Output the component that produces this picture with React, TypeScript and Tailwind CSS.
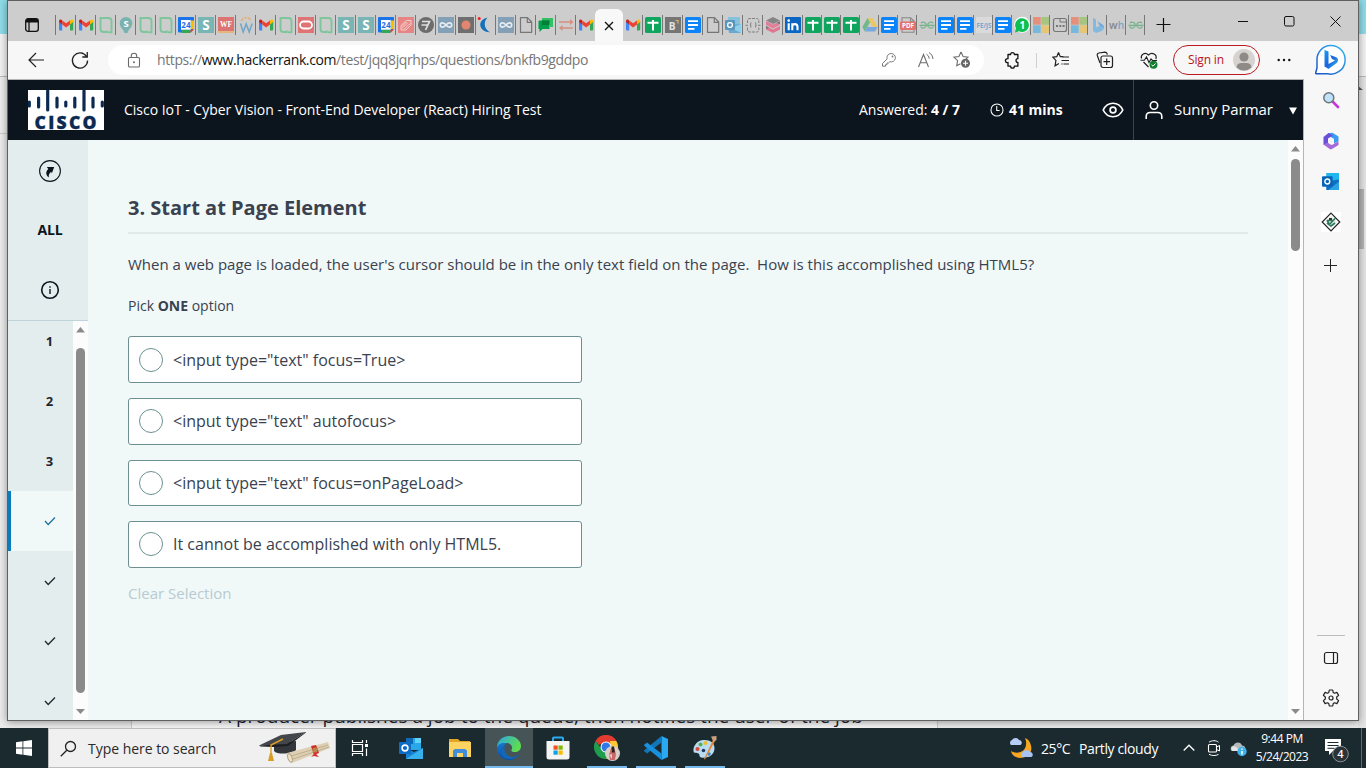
import React, { type ReactNode } from "react";

/* ---------- helpers ---------- */

function Icon({ size = 16, box = 16, className = "", children }: { size?: number; box?: number; className?: string; children: ReactNode }) {
  return (
    <svg width={size} height={size} viewBox={`0 0 ${box} ${box}`} fill="none" className={`shrink-0 overflow-visible ${className}`}>
      {children}
    </svg>
  );
}

/* ---------- tab favicons ---------- */

const Letter = ({ children, x = 8, y = 12, s = 12, fill = "#fff", family = "Open Sans", len }: { children: string; x?: number; y?: number; s?: number; fill?: string; family?: string; len?: number }) => (
  <text x={x} y={y} fontSize={s} fill={fill} textAnchor="middle" fontWeight={700} fontFamily={family} textLength={len} lengthAdjust="spacingAndGlyphs">
    {children}
  </text>
);

const Gmail = () => (
  <Icon>
    <path d="M1 4v8.600c0 .5.4.9.9.9h2.300V6.200z" fill="#4285f4" />
    <path d="M15.200 4v8.600c0 .5-.4.9-.9.9H12V6.200z" fill="#34a853" />
    <path d="M12 3.600v3.900l3.200-2.400V4.200c0-1.500-1.600-2-2.600-1.200z" fill="#fbbc04" />
    <path d="M4.200 3.600v3.900L1 5.100V4.200C1 2.700 2.600 2.200 3.600 3z" fill="#c5221f" />
    <path d="M4.200 7.500V3.400L8.100 6.300 12 3.400v4.100l-3.900 3z" fill="#ea4335" />
  </Icon>
);
const Bracket = () => (
  <Icon>
    <path d="M10 15.200h3.500V4c0-2-1-3-3-3H6.500V2M9 1H2.500v11c0 2 1 3 3 3h3.300V13.500" stroke="#7fc59c" strokeWidth="1.900" />
  </Icon>
);
const PinS = () => (
  <Icon>
    <path d="M8 0a6.300 6.300 0 0 1 6.300 6.300c0 4-3.300 5.200-4.800 9.700h-3C5 11.500 1.700 10.300 1.700 6.300A6.300 6.300 0 0 1 8 0z" fill="#79b3b1" />
    <Letter y={9.800} s={9.500}>S</Letter>
  </Icon>
);
const Calendar = () => (
  <Icon>
    <path d="M1 0h14a1 1 0 0 1 1 1v11l-4 3.500H1a1 1 0 0 1-1-1V1a1 1 0 0 1 1-1z" fill="#1a73e8" />
    <path d="M12.500 3.500H16V12h-3.500z" fill="#fbbc04" />
    <path d="M3.500 12.500h9V16h-9z" fill="#34a853" />
    <path d="M12.500 12.500H16L12.500 16z" fill="#ea4335" />
    <path d="M3 3h9.700v9.700H3z" fill="#fff" />
    <Letter x={7.900} y={10.800} s={8} fill="#1a73e8">24</Letter>
  </Icon>
);
const SquareS = () => (
  <Icon>
    <path d="M0 0h16v16H0z" fill="#78b5b4" />
    <Letter y={12.900} s={13.500}>S</Letter>
  </Icon>
);
const Wf = () => (
  <Icon>
    <path d="M0 0h16v14H0z" fill="#dd7474" />
    <path d="M0 14h16v2H0z" fill="#e3b77c" />
    <Letter y={10} s={7.500} family="Liberation Serif" len={12}>WF</Letter>
  </Icon>
);
const ArcW = () => (
  <Icon>
    <path d="M3.500 4a5 5 0 0 1 9.500 0" stroke="#e3ab6c" strokeWidth="1.300" strokeDasharray="3 1" />
    <path d="M2.500 6.500l2.700 8.500L8.200 7l3 8 3-8.500" stroke="#73a5c6" strokeWidth="1.500" />
  </Icon>
);
const Oracle = () => (
  <Icon>
    <path d="M0 0h16v16H0z" fill="#e07373" />
    <rect x="2" y="4.500" width="12" height="7" rx="3.500" stroke="#fff" strokeWidth="1.800" />
  </Icon>
);
const Stripes = () => (
  <Icon>
    <path d="M0 0h16v16H0z" fill="#e68583" />
    <path d="M3 8.500L8.500 3.500H13v4.500L8 13H3zM4 11.500l6-6M6 12.500l6-6M4 9.500l4.500-4.500" stroke="#f6d7d4" strokeWidth=".9" />
  </Icon>
);
const Seven = () => (
  <Icon>
    <circle cx="8" cy="8" r="8" fill="#6c6c6c" />
    <path d="M4 4.500h7.500L7.500 13M3.500 8h7" stroke="#e0e0e0" strokeWidth="1.700" />
  </Icon>
);
const Infinity2 = () => (
  <Icon>
    <path d="M0 0h16v16H0z" fill="#84a0b6" />
    <path d="M8 8C6 5.400 2.300 5 2.300 8S6 10.600 8 8s5.700-3 5.700 0S10 10.600 8 8z" stroke="#e6edf2" strokeWidth="1.700" />
  </Icon>
);
const Record = () => (
  <Icon>
    <path d="M0 0h16v16H0z" fill="#6f6f6f" />
    <circle cx="8" cy="8" r="4.500" fill="#e2866f" />
  </Icon>
);
const Crescent = () => (
  <Icon>
    <path d="M9.500.5C3 2 .5 7 3.500 11.500c1.800 2.600 5 4 9 3.800C7.500 13.500 4 6.500 9.500.5z" fill="#1371b9" />
    <circle cx="1.200" cy="1.500" r="1.500" fill="#f2201f" />
  </Icon>
);
const Doc = () => (
  <Icon>
    <path d="M2.500 .7h7L13.700 5v10.300H2.500zM9.300 .7v4.700h4.400" stroke="#767676" strokeWidth="1.200" strokeLinejoin="round" />
  </Icon>
);
const Chat = () => (
  <Icon>
    <path d="M4 1h11v9h-3V5H4z" fill="#34bf63" />
    <path d="M.5 4.500A1 1 0 0 1 1.500 3.500h10v8.500H4.500L1.500 15v-3H.5z" fill="#00a04a" />
    <path d="M4 3.500h7.500V8H4z" fill="#007f38" />
  </Icon>
);
const Arrows = () => (
  <Icon>
    <path d="M1 5h12M3 11h12" stroke="#d88f81" strokeWidth="1.400" />
    <path d="M12 2l3.500 3L12 8zM4.500 8L1 11l3.500 3z" fill="#d88f81" />
  </Icon>
);
const Sheets = () => (
  <Icon>
    <rect width="16" height="16" rx="1.500" fill="#0fa55e" />
    <path d="M2.500 5.700h11M8 3v10.500" stroke="#fff" strokeWidth="2" />
  </Icon>
);
const BoxB = () => (
  <Icon>
    <path d="M0 0h16v16H0z" fill="#757575" />
    <Letter x={7} y={13} s={10} fill="#e4e4e4">B</Letter>
    <path d="M10.500 3.500H13v3" stroke="#d8b274" strokeWidth="1.200" />
  </Icon>
);
const Docs = () => (
  <Icon>
    <rect width="16" height="16" rx="1.500" fill="#0a84f8" />
    <path d="M3 4.200h10M3 8h10M3 11.800h6.500" stroke="#fff" strokeWidth="1.800" />
  </Icon>
);
const OutlookFaded = () => (
  <Icon>
    <path d="M3 0h12v11H3z" fill="#86c2dc" />
    <path d="M3 8l13-1v9H4z" fill="#67a9cf" />
    <path d="M6 11l10-4v9z" fill="#8fd0e8" />
    <rect y="3" width="10" height="10" rx="1" fill="#5d96bd" />
    <circle cx="5" cy="8" r="2.400" stroke="#fff" strokeWidth="1.300" />
  </Icon>
);
const Braces = () => (
  <Icon>
    <path d="M2.500 6V3.500C2.500 2 3.500 1.500 5 1.500h6.500C13 1.500 13.800 2 13.800 3.500V6M2.500 10.500V13c0 1.500 1 2 2.500 2h6.500c1.500 0 2.300-.5 2.300-2v-2.500M.5 8.300h2.500M13 8.300h2.500" stroke="#7e7e7e" strokeWidth="1" strokeDasharray="3 1" />
    <path d="M6 5.500L5.500 8l.5 2.500M10.500 5.500L11 8l-.5 2.500" stroke="#7e7e7e" />
  </Icon>
);
const Stack = () => (
  <Icon>
    <path d="M8 0l7 3.500L8 7 1 3.500z" fill="#858585" />
    <path d="M1 4l7 3.500 3-1.500 4 2-7 3.500L1 8z" fill="#e07f97" />
    <path d="M11 6l4-2v3.500z" fill="#777" />
    <path d="M1 9l7 3.500L15 9v3.500L8 16l-7-3.500z" fill="#df7791" />
    <path d="M1 9l3 1.500-3 1.500z" fill="#777" />
  </Icon>
);
const LinkedIn = () => (
  <Icon>
    <rect width="16" height="16" rx="1" fill="#0a66c2" />
    <path d="M3.700 6.200v7M7.300 6.200v7M7.300 9.500c0-3 5.200-3.500 5.200.5v3.200" stroke="#fff" strokeWidth="2.100" />
    <circle cx="3.700" cy="3.600" r="1.300" fill="#fff" />
  </Icon>
);
const Drive = () => (
  <Icon>
    <path d="M5.500 1h5L5.500 9.700 2.800 14.500.3 10z" fill="#71b98b" />
    <path d="M5.500 1h5l5.200 9h-5z" fill="#e9c765" />
    <path d="M5.300 10h10.400l-2.500 4.500H2.800z" fill="#7ba7e0" />
  </Icon>
);
const Pdf = () => (
  <Icon>
    <path d="M2 5V.7h8.500L14 4v2M2 12v3.300h12V12M10.500 1v3.300H14" stroke="#888" strokeWidth="1.100" />
    <rect x="0" y="4.500" width="16" height="8.500" rx="1" fill="#e2726c" />
    <Letter y={11.300} s={6.500} len={12}>PDF</Letter>
  </Icon>
);
const Geeks = () => (
  <Icon>
    <path d="M1.800 6.200C3.500 4.500 7.300 5 7.400 8.300 7 11.600 2.600 12 1.700 9.500M.5 8.300h7M14.200 6.200C12.500 4.500 8.700 5 8.600 8.300c.4 3.300 4.800 3.700 5.700 1.200M15.500 8.300h-7" stroke="#73b18a" strokeWidth="1.200" />
  </Icon>
);
const FeJs = () => (
  <Icon>
    <path d="M0 0h16v16H0z" fill="#dadada" />
    <Letter y={10.500} s={6.500} fill="#79a8ce" len={15}>FE/JS</Letter>
  </Icon>
);
const WhatsApp = () => (
  <Icon>
    <circle cx="8.200" cy="7.800" r="8" fill="#fff" />
    <path d="M1 15.500l1-4A6.900 6.900 0 1 1 5 14.300z" fill="#0cbf52" />
    <Letter x={8.300} y={11.500} s={10}>1</Letter>
  </Icon>
);
const Microsoft = () => (
  <Icon>
    <path d="M0 0h7.700v7.700H0z" fill="#e4907a" />
    <path d="M8.300 0H16v7.700H8.300z" fill="#a5c580" />
    <path d="M0 8.300h7.700V16H0z" fill="#77b9dd" />
    <path d="M8.300 8.300H16V16H8.300z" fill="#e6c676" />
  </Icon>
);
const WindowDots = () => (
  <Icon>
    <rect x="1.500" y="1.500" width="13" height="13" rx="2" stroke="#767676" strokeWidth="1.200" />
    <path d="M8 1.500V5H14.500" stroke="#767676" />
    <path d="M4 9h2M7.300 9h2M10.600 9h2" stroke="#767676" strokeWidth="1.800" />
  </Icon>
);
const BingFaded = () => (
  <Icon>
    <path d="M3 1l3 1.200v8L12 8l2 1.500c.5 2-1 4-3 4.700L6 16l-3-2z" fill="#84b8de" />
    <path d="M7.500 4.500l5 3c1 .8 1.500 2 1.300 3.200L9.500 8.500z" fill="#6faadc" />
  </Icon>
);
const Wh = () => (
  <Icon>
    <text x="0" y="12" fontSize="11.500" fontWeight={600} fontFamily="Open Sans" fill="#858585" textLength="8.500" lengthAdjust="spacingAndGlyphs">w</text>
    <text x="8.700" y="12" fontSize="11.500" fontWeight={600} fontFamily="Open Sans" fill="#7fa2c4" textLength="6.500" lengthAdjust="spacingAndGlyphs">h</text>
  </Icon>
);

const leftTabs = [Gmail, Gmail, Bracket, PinS, Bracket, Bracket, Calendar, SquareS, Wf, ArcW, Gmail, Bracket, Oracle, Bracket, SquareS, SquareS, Calendar, Stripes, Seven, Infinity2, Record, Crescent, Infinity2, Doc, Chat, Arrows, Gmail];
const midTabs = [Sheets, BoxB, Docs, Doc, OutlookFaded, Braces, Stack, LinkedIn];
const narrowTabs = [Sheets, Sheets, Sheets, Drive, Docs, Pdf, Geeks, Docs, Docs, FeJs, Docs, WhatsApp, Microsoft, WindowDots, Microsoft, BingFaded, Wh, Geeks];

function TabStrip() {
  return (
    <div className="flex h-10 w-full shrink-0 items-end bg-[#cdcdcd]">
      <div className="flex h-8 w-[47px] shrink-0 items-center justify-center">
        <Icon size={16} className="mt-[-1px]">
          <rect x="1.700" y="1.700" width="12.600" height="12.600" rx="2.300" stroke="#111" strokeWidth="1.300" />
          <path d="M2 3.500a1.500 1.500 0 0 1 1.500-1.500h9A1.500 1.500 0 0 1 14 3.500v2H2z" fill="#111" />
          <path d="M5 5v9" stroke="#111" strokeWidth="1.300" />
        </Icon>
      </div>
      {leftTabs.map((T, i) => (
        <div key={i} className="mb-[6px] flex h-5 w-5 shrink-0 items-center border-l border-[#777] pl-0.5"><T /></div>
      ))}
      <div className="flex h-8 w-7 shrink-0 items-center justify-center rounded-t-md bg-[#f8f8f8]">
        <Icon size={10} box={10} className="mt-0.5"><path d="M1 1l8 8M9 1L1 9" stroke="#111" strokeWidth="1.300" /></Icon>
      </div>
      <div className="mb-[6px] flex h-5 w-[19px] shrink-0 items-center pl-0.5"><Gmail /></div>
      {midTabs.map((T, i) => (
        <div key={i} className="mb-[6px] flex h-5 w-5 shrink-0 items-center border-l border-[#777] pl-0.5"><T /></div>
      ))}
      {narrowTabs.map((T, i) => (
        <div key={i} className="mb-[6px] flex h-5 w-[19px] shrink-0 items-center border-l border-[#777] pl-[1.5px]"><T /></div>
      ))}
      <div className="mb-[6px] flex h-5 w-9 shrink-0 items-center justify-center border-l border-[#777]">
        <Icon size={14} box={14}><path d="M7.500 0v14M.5 6.500h14" stroke="#111" strokeWidth="1.200" /></Icon>
      </div>
      <div className="ml-auto flex h-10 items-center">
        <div className="flex w-[46px] justify-center"><Icon size={10} box={10}><path d="M0 5.500h10" stroke="#111" /></Icon></div>
        <div className="flex w-[46px] justify-center"><Icon size={11} box={11}><rect x=".5" y=".5" width="9.500" height="9.500" rx="1.500" stroke="#111" /></Icon></div>
        <div className="flex w-[46px] justify-center"><Icon size={11} box={11}><path d="M.5.5l10 10M10.500.5l-10 10" stroke="#111" /></Icon></div>
      </div>
    </div>
  );
}

/* ---------- toolbar ---------- */

function BingBadge() {
  return (
    <Icon size={32} box={32}>
      <defs>
        <linearGradient id="bring" x1="0" y1="1" x2="1" y2="0"><stop offset="0" stopColor="#1b50c8" /><stop offset="1" stopColor="#33b9f5" /></linearGradient>
        <linearGradient id="bb" x1="0" y1="0" x2="1" y2="1"><stop offset="0" stopColor="#1b9ff0" /><stop offset=".5" stopColor="#1d62dd" /><stop offset="1" stopColor="#30c5ef" /></linearGradient>
      </defs>
      <path d="M16.500 1.500a14.300 14.300 0 1 1-3 28.200H2.200c-.5 0-.7-.4-.5-.9L3 24V15.500A14 14 0 0 1 16.500 1.500z" fill="#fff" stroke="url(#bring)" strokeWidth="1.500" />
      <path d="M10.500 6l4 1.500V20l6.500-3.500-3-1.500-2-4 6.300 2.200c1 .5 1.700 1.500 1.700 2.800 0 1.600-.7 2.800-2 3.500L14.500 25l-4-2.500z" fill="url(#bb)" />
    </Icon>
  );
}

function Toolbar() {
  return (
    <div className="flex h-[38px] w-full items-center">
      <div className="flex w-[100px] items-center pl-5">
        <Icon size={16}><path d="M8 1L1 8l7 7M1 8h15" stroke="#222" strokeWidth="1.200" /></Icon>
        <Icon size={18} box={18} className="ml-[27px]">
          <path d="M15.500 5.500A7.600 7.600 0 1 0 16.600 9.500M16.300 1v5h-5" stroke="#222" strokeWidth="1.300" />
        </Icon>
      </div>
      <div className="flex h-[30px] w-[876px] items-center rounded-full bg-white pl-[18px] pr-3">
        <Icon size={16}>
          <rect x="2.500" y="5.500" width="11" height="9.500" rx="1.300" stroke="#6a6a6a" strokeWidth="1.100" />
          <path d="M5.300 5.500V4a2.700 2.700 0 0 1 5.400 0v1.500" stroke="#6a6a6a" strokeWidth="1.100" />
          <circle cx="8" cy="10.200" r="1" fill="#6a6a6a" />
        </Icon>
        <span className="mb-0.5 ml-[15px] whitespace-nowrap text-[14px] tracking-[-0.39px] text-[#767676]">
          https://<span className="text-[#111]">www.hackerrank.com</span>/test/jqq8jqrhps/questions/bnkfb9gddpo
        </span>
        <div className="ml-auto flex items-center gap-5">
          <Icon size={16}>
            <path d="M10.300 1.500a4.200 4.200 0 1 1-1.400 8.200L7.500 11H6v1.700H4.500v1.500H1.500V11.500l4.600-4.600A4.200 4.200 0 0 1 10.300 1.500z" stroke="#7a7a7a" />
            <circle cx="11.500" cy="4.500" r=".9" fill="#7a7a7a" />
          </Icon>
          <Icon size={17} box={17}>
            <path d="M1.500 15L6.500 2.500 11.500 15M3.300 10.700h6.500" stroke="#6e6e6e" strokeWidth="1.100" />
            <path d="M9.500 2.200a5 5 0 0 1 2.700 4.500M12 .5a7.500 7.500 0 0 1 4 6.500" stroke="#6e6e6e" />
          </Icon>
          <Icon size={18} box={18} className="-ml-px mr-px">
            <path d="M8 1l2.100 4.500 4.900.6-2.500 2.500M8 1L5.900 5.500.9 6.200l3.700 3.500-.9 5 3.800-2" stroke="#6e6e6e" strokeWidth="1.100" />
            <circle cx="12.500" cy="12.300" r="4.500" fill="#666" />
            <path d="M12.500 9.800v5M10 12.300h5" stroke="#fff" strokeWidth="1.100" />
          </Icon>
        </div>
      </div>
      <div className="flex flex-1 items-center pl-5">
        <Icon size={17} box={17}>
          <path d="M4 2.500h2.600a1.900 1.900 0 0 1 3.800 0h3.500v4.200a1.900 1.900 0 0 0 0 3.800v3.700h-3.500a1.900 1.900 0 0 1-3.800 0H4v-3.700a1.900 1.900 0 0 1-1.200-3.700L4 6.700z" stroke="#111" strokeWidth="1.300" strokeLinejoin="round" />
        </Icon>
        <div className="ml-[15px] h-[15px] w-px bg-[#cfcfcf]" />
        <Icon size={18} box={18} className="ml-[15px]">
          <path d="M6.500 1.500l1.800 4.200h3M6.500 1.500L4.800 5.700.9 6.200l3 3.200-.8 5.400 3.800-2.300M9.500 12.700l1 .6" stroke="#222" strokeWidth="1.200" />
          <path d="M10.500 6h6.500M9.500 9.500H17M11.500 13H17" stroke="#222" strokeWidth="1.200" />
        </Icon>
        <Icon size={18} box={18} className="ml-[26px]">
          <path d="M4 12L1.300 4.500a2 2 0 0 1 1.500-2.500L9 1.200c1 0 1.600.4 2 1.300l.3 1.200" stroke="#222" strokeWidth="1.200" />
          <rect x="5" y="5" width="11.500" height="11.500" rx="2" stroke="#222" strokeWidth="1.200" />
          <path d="M10.700 7.500v6.500M7.500 10.700H14" stroke="#222" strokeWidth="1.200" />
        </Icon>
        <Icon size={18} box={18} className="ml-[26px]">
          <path d="M1.500 7.500C.3 3.500 5 .5 8.500 4c3.500-3.500 9-.5 7.300 4M3.500 11L8.500 16" stroke="#222" strokeWidth="1.200" />
          <path d="M.5 9.300h3.800L6.500 6l2.500 5.500L11 8l1.500 1.500H17" stroke="#222" strokeWidth="1.100" />
          <circle cx="13.500" cy="13.700" r="4" fill="#13802f" />
          <path d="M11.500 13.800l1.500 1.400 2.500-2.700" stroke="#fff" />
        </Icon>
        <div className="ml-[15px] flex h-[30px] w-[87px] items-center rounded-full border border-[#bb1a22] pl-3.5">
          <span className="whitespace-nowrap text-[12px] tracking-[-0.15px] text-[#b5151c]">Sign in</span>
          <Icon size={22} box={22} className="ml-[9px]">
            <circle cx="11" cy="11" r="11" fill="#d5d2d0" />
            <circle cx="11" cy="8" r="4.600" fill="#8d8a88" />
            <path d="M3.500 18.500C4 14 7 14 11 14s7 0 7.500 4.500a11 11 0 0 1-15 0z" fill="#8d8a88" />
          </Icon>
        </div>
        <Icon size={14} box={14} className="ml-[17px]">
          <circle cx="1.700" cy="7" r="1.200" fill="#111" /><circle cx="7" cy="7" r="1.200" fill="#111" /><circle cx="12.300" cy="7" r="1.200" fill="#111" />
        </Icon>
        <div className="ml-[23px] h-8 w-8"><BingBadge /></div>
      </div>
    </div>
  );
}

/* ---------- page header ---------- */

const ciscoBars: [number, number, number][] = [
  [1.3, 11, 17], [10.6, 7, 18], [19.7, 0, 21], [29, 7, 18], [37.8, 11, 17], [46.8, 7, 18], [56, 0, 21], [65, 7, 18], [74.3, 11, 17],
];

function PageHeader() {
  return (
    <header className="flex h-[60px] w-[1295px] shrink-0 items-center bg-[#0c141d] pl-5 text-white">
      <svg width="76" height="40" viewBox="0 0 76 40" className="shrink-0 bg-white">
        {ciscoBars.map(([x, a, b]) => (
          <line key={x} x1={x} x2={x} y1={a + 1} y2={b - 1} stroke="#0b2a52" strokeWidth="3.200" strokeLinecap="round" />
        ))}
        <text x="6.500" y="39.400" fontSize="17.500" fontFamily="Open Sans" fontWeight={800} fill="#0b2a52" stroke="#0b2a52" strokeWidth=".3" textLength="62" lengthAdjust="spacing">CISCO</text>
      </svg>
      <span className="mb-0.5 ml-5 w-[735px] whitespace-nowrap text-[14px] tracking-[-0.02px]">Cisco IoT - Cyber Vision - Front-End Developer (React) Hiring Test</span>
      <span className="mb-0.5 whitespace-nowrap text-[14px] tracking-[-0.03px]">Answered: <b>4 / 7</b></span>
      <div className="ml-[30px] flex items-center">
        <Icon size={14}>
          <circle cx="8" cy="8" r="6.900" stroke="#fff" strokeWidth="1.200" />
          <path d="M7.700 3.500v5H11" stroke="#fff" strokeWidth="1.200" />
        </Icon>
        <b className="mb-0.5 ml-[5px] w-[54px] whitespace-nowrap text-[14px]">41 mins</b>
      </div>
      <Icon size={22} box={22} className="ml-[39px]">
        <path d="M1.200 11C5.500 2 16.500 2 20.800 11 16.500 20 5.500 20 1.200 11z" stroke="#fff" strokeWidth="1.700" />
        <circle cx="11" cy="11" r="2.900" stroke="#fff" strokeWidth="1.700" />
      </Icon>
      <div className="ml-[9px] flex h-full flex-1 items-center border-l border-[#3b434b] pl-[11px]">
        <Icon size={18} box={18}>
          <circle cx="9" cy="4.500" r="3.700" stroke="#fff" strokeWidth="1.600" />
          <path d="M1.200 18v-2.500c0-2.500 1.500-4 4-4h7.600c2.500 0 4 1.500 4 4V18" stroke="#fff" strokeWidth="1.600" />
        </Icon>
        <span className="mb-0.5 ml-[11px] w-[99px] whitespace-nowrap text-[15px]">Sunny Parmar</span>
        <Icon size={8} box={8} className="ml-4 mt-px"><path d="M0 .5h8L4 7.500z" fill="#fff" /></Icon>
      </div>
    </header>
  );
}

/* ---------- scroll bars ---------- */

function Track({ children }: { children: ReactNode }) {
  return (
    <div className="flex h-full w-[15px] shrink-0 flex-col items-center bg-[#fcfcfc] pt-[5px]">
      <Icon size={9} box={9}><path d="M0 6.500h9L4.500 1z" fill="#8b8b8b" /></Icon>
      {children}
      <Icon size={9} box={9} className="mb-1 mt-auto"><path d="M0 2h9L4.500 7z" fill="#8b8b8b" /></Icon>
    </div>
  );
}

/* ---------- question navigation ---------- */

const navItems: { label?: string; active?: boolean }[] = [{ label: "1" }, { label: "2" }, { label: "3" }, { active: true }, {}, {}, {}];

function QuestionNav() {
  return (
    <nav className="flex w-20 shrink-0 flex-col bg-[#e4edee]">
      <div className="flex h-[181px] shrink-0 flex-col items-center border-b border-[#bfd3da] pl-1 pt-px">
        <div className="flex h-[60px] items-center">
          <Icon size={22} box={22}>
            <circle cx="11" cy="11" r="10.400" stroke="#0c151e" strokeWidth="1.100" />
            <path d="M7.800 7H15.200L12.800 13.500 12.300 11.700C10.500 12.800 9.500 14.500 9.800 17.500 6.500 15 6.500 11.500 9.300 9z" fill="#0c151e" />
          </Icon>
        </div>
        <div className="flex h-[59px] items-center pb-0.5 text-[14px] font-bold tracking-[-0.1px] text-[#0c151e]">ALL</div>
        <div className="flex h-[60px] items-center">
          <Icon size={20} box={20}>
            <circle cx="10" cy="10" r="8.300" stroke="#0c151e" strokeWidth="1.600" />
            <path d="M10 9v5M10 6.200v1.500" stroke="#0c151e" strokeWidth="1.400" />
          </Icon>
        </div>
      </div>
      <div className="flex h-[399px] overflow-hidden">
        <div className="mt-[-10.500px] w-[65px] shrink-0">
          {navItems.map((n, i) => (
            <div
              key={i}
              className={
                n.active
                  ? "flex h-[60px] items-center justify-center border-l-[3px] border-[#0a7bbd] bg-[#f1f8f8] pl-[15px] text-[#23719c]"
                  : "flex h-[60px] items-center justify-center pl-[18px] text-[#22272d]"
              }
            >
              {n.label ? (
                <span className="mt-0.5 text-[13px] font-bold">{n.label}</span>
              ) : (
                <Icon size={12} box={12} className="mt-px"><path d="M1 6l3.200 3.500L11 2.500" stroke="currentColor" strokeWidth="1.300" /></Icon>
              )}
            </div>
          ))}
        </div>
        <Track><div className="mt-[13px] h-[345px] w-[9px] rounded-full bg-[#8b8b8b]" /></Track>
      </div>
    </nav>
  );
}

/* ---------- question ---------- */

const options = ['<input type="text" focus=True>', '<input type="text" autofocus>', '<input type="text" focus=onPageLoad>', "It cannot be accomplished with only HTML5."];

function Question() {
  return (
    <main className="flex w-[1200px] shrink-0 flex-col bg-[#f1f8f8] pl-10 pr-10 pt-[54px] text-[#39424e]">
      <h1 className="border-b-2 border-[#e1eaeb] pb-2.5 text-[20px] font-bold leading-7">3. Start at Page Element</h1>
      <p className="mt-5 whitespace-pre text-[15px] leading-5">When a web page is loaded, the user's cursor should be in the only text field on the page.  How is this accomplished using HTML5?</p>
      <p className="mt-[22px] text-[14px] leading-5">Pick <b>ONE</b> option</p>
      <div className="mt-[20.200px] flex w-[454px] flex-col gap-[15px]">
        {options.map((o) => (
          <label key={o} className="flex h-[46.670px] items-center rounded-[3px] border border-[#6c9092] bg-white pl-2.5">
            <span className="h-6 w-6 shrink-0 rounded-full border border-[#6c9092]" />
            <span className="ml-2.5 text-[16px] leading-6">{o}</span>
          </label>
        ))}
      </div>
      <span className="mt-[15px] text-[15px] leading-5 text-[#b7cbd1]">Clear Selection</span>
    </main>
  );
}

/* ---------- edge sidebar ---------- */

function EdgeSidebar() {
  return (
    <aside className="flex w-[55px] shrink-0 flex-col items-center border-l border-[#b5b5b5] bg-[#f7f7f7] pr-px pt-3">
      <Icon size={18} box={18}>
        <path d="M11 11l5 5" stroke="#c239d9" strokeWidth="2.600" strokeLinecap="round" />
        <circle cx="6.800" cy="6.800" r="5" fill="#bfe3fa" stroke="#6f7479" strokeWidth="1.500" />
      </Icon>
      <Icon size={18} box={18} className="mt-[23px]">
        <path d="M6 1.200L10.500.800 16.500 4.500V9L12 11.500V7L6.500 4z" fill="#3a9cf0" />
        <path d="M6.500 1L11 3.500 6 6.500v5L1.500 13V5z" fill="#6a4fd8" />
        <path d="M1.500 12.500L6 10.500l4 2.500 6.500-4v4L9.500 17.200H8z" fill="#a56ad9" />
        <path d="M6.300 7L9 5.300 11.700 7v4L9 12.700 6.300 11z" fill="#f7f7f7" />
      </Icon>
      <Icon size={17} className="mt-[23px]">
        <path d="M4 0h12v11H4z" fill="#22b5ee" />
        <path d="M4 8l12-2v10H4z" fill="#0f6fc0" />
        <path d="M6 16l10-8v8z" fill="#2aa4e4" />
        <rect y="3" width="10" height="10" rx="1" fill="#0a64b8" />
        <circle cx="5" cy="8" r="2.300" stroke="#fff" strokeWidth="1.300" />
      </Icon>
      <Icon size={20} box={20} className="mt-[22px] bg-white">
        <path d="M10 1.200l8.800 8.800-8.800 8.800L1.200 10z" stroke="#222" strokeWidth="1.200" />
        <path d="M10 4l6 6-6 6-6-6z" fill="#e4ece8" />
        <path d="M6 8l2.500 4.500L14.500 6M6 11l4 3 4-3M6.500 8.500h6" stroke="#2f7a5c" strokeWidth="1.600" />
        <path d="M8 6h3v2H8z" fill="#333" />
      </Icon>
      <Icon size={13} box={13} className="mt-[27px]"><path d="M6.500 0v13M0 6.500h13" stroke="#222" /></Icon>
      <div className="mt-auto h-px w-7 bg-[#bdbdbd]" />
      <Icon size={16} className="mt-[14px]">
        <rect x="1.500" y="2.500" width="13" height="11" rx="2" stroke="#222" strokeWidth="1.200" />
        <path d="M10.500 2.500v11" stroke="#222" strokeWidth="1.200" />
      </Icon>
      <Icon size={18} box={18} className="mb-[13px] mt-[23px]">
        <path d="M7.300 1h3.400l.5 2.400 1.300.8 2.400-.8L16.600 6.400l-1.900 1.600v2l1.900 1.600-1.700 3-2.400-.8-1.300.8-.5 2.400H7.300l-.5-2.400-1.300-.8-2.400.8-1.700-3L3.300 10V8L1.400 6.400l1.700-3 2.400.8 1.300-.8z" stroke="#222" strokeWidth="1.200" strokeLinejoin="round" />
        <circle cx="9" cy="9" r="2" stroke="#222" strokeWidth="1.200" />
      </Icon>
    </aside>
  );
}

/* ---------- task bar ---------- */

function GraduationArt() {
  return (
    <svg width="76" height="34" viewBox="0 0 76 34" fill="none" className="shrink-0">
      <path d="M15 13v7c3 4 19 3 22-1v-9z" fill="#33363a" />
      <path d="M0 14.500L22 4l25-3-19 12-13 1z" fill="#43464b" />
      <path d="M0 14.500l1.500 1L15 16l14-1L47 1.500V1L28 13z" fill="#1d1f22" />
      <path d="M24 8l-12 6v11" stroke="#d99e22" strokeWidth="1.400" />
      <path d="M11 22l2 0 2 8h-6z" fill="#d99e22" />
      <path d="M28 22l41-11 2 6-38 15c-4-1-6-6-5-10z" fill="#ddd0b4" />
      <path d="M29 26l40-12M31 29l39-13" stroke="#b9a684" strokeWidth=".8" />
      <ellipse cx="31" cy="27" rx="2" ry="4.500" transform="rotate(-20 31 27)" fill="#eee3c9" stroke="#a48f6a" strokeWidth=".7" />
      <path d="M52 15l5-1 3 8-5 2zM56 22l4 4-5-1-3 1z" fill="#d22b2b" />
      <circle cx="56" cy="19" r="2.600" fill="#b5894d" />
    </svg>
  );
}

const OutlookApp = () => (
  <Icon size={24} box={24}>
    <path d="M7 2h15v12H7z" fill="#2aa7e8" /><path d="M7 2h7v6H7z" fill="#1068b8" /><path d="M16 2h6v5h-6z" fill="#5fd4f7" />
    <path d="M7 12l8 4 9-4v11H7z" fill="#1683d6" /><path d="M7 23l17-11v11z" fill="#37b1ee" />
    <rect y="6" width="12" height="12" rx="1" fill="#0d6cc4" /><circle cx="6" cy="12" r="2.900" stroke="#fff" strokeWidth="1.600" />
  </Icon>
);
const ExplorerApp = () => (
  <Icon size={24} box={24}>
    <path d="M1 3h9l2 2h10v5H1z" fill="#e5a524" /><path d="M1 6h22v15H1z" fill="#fcd462" /><path d="M5 21v-6.500l2-1.500h10l2 1.500V21h-4v-4H9v4z" fill="#3f8ddb" />
  </Icon>
);
const EdgeApp = () => (
  <Icon size={24} box={24}>
    <defs>
      <linearGradient id="eg" x1="0" y1="0" x2="1" y2=".4"><stop offset="0" stopColor="#2aa5e8" /><stop offset="1" stopColor="#5fdc50" /></linearGradient>
      <linearGradient id="eb" x1="0" y1="0" x2="0" y2="1"><stop offset="0" stopColor="#1577cf" /><stop offset="1" stopColor="#0d4fa3" /></linearGradient>
    </defs>
    <path d="M0 12C0 5 5 0 12 0s12 5 12 10c0 4-3 6-6 6-4 0-4-1.500-3.300-2.500C15.500 12 15.500 7.500 10 7 5 6.600 1 9 0 12z" fill="url(#eg)" />
    <path d="M0 12c1-4 6-6 10-4.500-4 1-5 5-4 8.500 2 6 9 7.500 16 2.500-2 3.500-6 5.500-10 5.500C5 24 0 19 0 12z" fill="url(#eb)" />
    <path d="M8.500 9c-2 3-1.500 8 3 11 3 1.800 8 .8 10.500-1.500-3 4-9 6-14 3.500-5-3-5.500-10 .5-13z" fill="#1466b8" />
  </Icon>
);
const StoreApp = () => (
  <Icon size={24} box={24}>
    <path d="M7 6V2.500A1 1 0 0 1 8 1.500h8a1 1 0 0 1 1 1V6" stroke="#2caaf0" strokeWidth="2" />
    <path d="M.5 5h23v16a2.500 2.500 0 0 1-2.500 2.500H3A2.500 2.500 0 0 1 .5 21z" fill="#f4f4f4" />
    <path d="M7.500 9.500h4.200v4.200H7.500z" fill="#f25022" /><path d="M12.500 9.500h4.200v4.200h-4.200z" fill="#7fba00" />
    <path d="M7.500 14.500h4.200v4.200H7.500z" fill="#00a4ef" /><path d="M12.500 14.500h4.200v4.200h-4.200z" fill="#ffb900" />
  </Icon>
);
const ChromeApp = () => (
  <Icon size={26} box={26}>
    <path d="M12 12L1.600 6A12 12 0 0 1 22.400 6z" fill="#ea4335" />
    <path d="M12 0A12 12 0 0 1 22.400 6H12L5 10 1.600 6A12 12 0 0 1 12 0z" fill="#e33b2e" />
    <path d="M22.400 6A12 12 0 0 1 12 24l5-9-1-9z" fill="#fcc934" />
    <path d="M1.600 6A12 12 0 0 0 12 24l5-8.500-7 1.500z" fill="#1e9e4d" />
    <circle cx="12" cy="12" r="5.500" fill="#fff" /><circle cx="12" cy="12" r="4.500" fill="#2f78e5" />
    <circle cx="18.500" cy="18.500" r="7.500" fill="#d8cfc8" /><path d="M17 13h3l2 6-1 6h-5l-1-5z" fill="#c9686a" /><path d="M17.500 11.500h2.500l1 6h-3z" fill="#33201e" />
    <path d="M15 20l3-1v5z" fill="#f1c2ba" />
  </Icon>
);
const CodeApp = () => (
  <Icon size={24} box={24}>
    <path d="M17.500 0L24 3v18l-6.500 3z" fill="#2aa8f2" />
    <path d="M17.500 0v6.500L3 17.500l-2.800-2.300v-1z" fill="#1276b8" />
    <path d="M17.500 24v-6.500L3 6.500.2 8.800v1z" fill="#1a8fdb" />
  </Icon>
);
const PaintApp = () => (
  <Icon size={26} box={26}>
    <path d="M11 5C4 6 1 12 1.500 16c.5 3 3 1.500 5 2.500s-.5 4 4 4.200C18 23 22.500 19 22.500 13S17 4.300 11 5z" fill="#b9dcf0" />
    <circle cx="5.500" cy="14" r="2" fill="#d6463c" /><circle cx="8.500" cy="9.500" r="2" fill="#54b04b" /><circle cx="13.500" cy="8" r="2" fill="#efbc31" /><circle cx="11.500" cy="15.500" r="1.800" fill="#1b3e63" /><circle cx="17" cy="19" r="1.800" fill="#3b86cc" />
    <path d="M21 5l-9 19 1 .5L23 6z" fill="#e3883b" /><path d="M19 1.500l5.500-.5 0 4-3 2z" fill="#c9a27b" />
  </Icon>
);

const apps: { I: () => ReactNode; state: "idle" | "open" | "active" }[] = [
  { I: OutlookApp, state: "idle" }, { I: ExplorerApp, state: "idle" }, { I: EdgeApp, state: "active" }, { I: StoreApp, state: "idle" },
  { I: ChromeApp, state: "open" }, { I: CodeApp, state: "open" }, { I: PaintApp, state: "open" },
];

function Taskbar() {
  return (
    <footer className="flex h-10 w-full shrink-0 items-center bg-[#1b2a2f] text-white">
      <div className="flex w-12 justify-center">
        <Icon size={16}><path d="M0 2.200l6.500-.9v6.300H0zM7.300 1.200L16 0v7.600H7.300zM0 8.400h6.500v6.300L0 13.800zM7.300 8.400H16V16l-8.700-1.200z" fill="#fff" /></Icon>
      </div>
      <div className="flex h-10 w-72 items-center border border-[#bdbdbd] bg-[#f0f0f0] pl-[11px] text-[#2a2a2a]">
        <Icon size={17} box={17}><circle cx="10.500" cy="6.500" r="5" stroke="#222" strokeWidth="1.300" /><path d="M6.800 10.200L.8 16.200" stroke="#222" strokeWidth="1.300" /></Icon>
        <span className="ml-[11px] w-[172px] whitespace-nowrap text-[14px] tracking-[-0.03px]">Type here to search</span>
        <GraduationArt />
      </div>
      <div className="mr-[3px] flex w-12 justify-center">
        <Icon size={18} box={18}><path d="M1.500 1v2.500h10V1M1.500 17v-2.500h10V17M1.500 5.500h10v7h-10zM15.500 1v3M15.500 9.500V17" stroke="#fff" strokeWidth="1.200" /><path d="M14 5h3v3h-3z" fill="#fff" /></Icon>
      </div>
      <div className="flex gap-px">
        {apps.map(({ I, state }, i) => (
          <div key={i} className={state === "active" ? "flex h-10 w-12 flex-col items-center bg-[#465458]" : "flex h-10 w-12 flex-col items-center"}>
            <div className="flex h-[38px] items-center pt-0.5"><I /></div>
            {state === "active" && <div className="h-0.5 w-12 bg-[#76b9ed]" />}
            {state === "open" && <div className="h-0.5 w-10 bg-[#76b9ed]" />}
          </div>
        ))}
      </div>
      <div className="ml-auto flex h-full items-center">
        <Icon size={24} box={24}>
          <path d="M16 2c2.500 6 1 12-4.500 14-3 1-6.500 1-9.500-1 1 5.500 7 8 12.500 6.500C21 20 24 14 21.500 8 20.500 5 19 3 16 2z" fill="#f5a623" />
          <path d="M2 9a3 3 0 0 1 1-5 4 4 0 0 1 7 0 2.700 2.700 0 0 1 1.500 5z" fill="#b6cdf5" />
          <path d="M13 21a3 3 0 0 1 1-5 4 4 0 0 1 7 0 2.700 2.700 0 0 1 1.500 5z" fill="#a7c2f3" />
        </Icon>
        <span className="ml-2 w-[38px] whitespace-nowrap text-[14px] tracking-[-0.4px]">25°C</span>
        <span className="w-[80px] whitespace-nowrap text-[14px] tracking-[-0.37px]">Partly cloudy</span>
        <Icon size={12} box={12} className="ml-6"><path d="M.7 8.500L6 3.200l5.300 5.300" stroke="#fff" strokeWidth="1.300" /></Icon>
        <Icon size={16} className="ml-[11px]">
          <path d="M3 2.200C6 .2 10 .2 12.500 2.200M3 14.300c3 1.700 7 1.700 9.500 0" stroke="#fff" /><rect x="2.500" y="4.500" width="8" height="7.500" rx="1" stroke="#fff" strokeWidth="1.100" /><path d="M10.500 7l3-1.500V11l-3-1.500" stroke="#fff" />
        </Icon>
        <Icon size={17} box={17} className="ml-2">
          <path d="M2 11C-.5 9 1 5.500 3.500 5.500 5 1.500 11 1.500 12 5.500c3 0 4 3 3 5.500z" fill="#b5b8ba" /><path d="M2 11C0 8 3 5 6 7l5 4z" fill="#e5e5e5" />
          <circle cx="12" cy="11.500" r="4.700" fill="#3fb2ec" /><path d="M12 11v3.500M12 8.500v1.300" stroke="#fff" strokeWidth="1.500" />
        </Icon>
        <div className="ml-[7px] flex w-14 flex-col items-center whitespace-nowrap text-[12px] leading-[18px]">
          <span className="tracking-[-0.45px]">9:44 PM</span>
          <span className="tracking-[-0.500px]">5/24/2023</span>
        </div>
        <Icon size={26} box={26} className="ml-[15px] mt-1">
          <path d="M0 2h16v12H8l-4 4v-4H0z" fill="#fff" /><path d="M2.500 5.500h11M2.500 8.500h11M2.500 11.300h7" stroke="#1b2a2f" />
          <circle cx="15.500" cy="17" r="7.800" fill="#2b3336" stroke="#8b9294" /><text x="15.500" y="21" fontSize="11" fill="#fff" fontFamily="Open Sans" fontWeight={600} textAnchor="middle">4</text>
        </Icon>
        <div className="ml-2.5 mr-1 h-full w-px bg-[#5d686c]" />
      </div>
    </footer>
  );
}

/* ---------- desktop ---------- */

function BackgroundWindow() {
  return (
    <div className="flex h-[728px] w-full flex-col bg-[#ececec]">
      <div className="h-[34px] w-full shrink-0 bg-[#8edce8]" />
      <div className="h-[43px] w-full shrink-0 border-b border-[#bbb] bg-[#f2f2f2]" />
      <div className="flex flex-1 justify-between">
        <div className="mt-14 h-px w-2 bg-[#ccc]" />
        <div className="-ml-2 mr-auto flex h-full w-[938px] items-end pl-[131px]">
          <div className="flex h-5 w-[807px] items-center whitespace-nowrap border-x border-[#ccc] bg-[#f6f6f6] pl-[65px] text-[19px] leading-5 text-[#1c2230]">
            <span className="mb-1 w-[22px] text-[22px]">•</span>
            <span className="mb-[5px]">A producer publishes a job to the queue, then notifies the user of the job</span>
          </div>
        </div>
        <div className="h-full w-2 bg-[#e4e4e4] pt-2">
          <Icon size={6} box={6}><path d="M0 1l5 4H0z" fill="#555" /></Icon>
          <div className="mt-[98px] h-[60px] w-1.5 bg-[#b3b3b3]" />
        </div>
      </div>
    </div>
  );
}

export default function App() {
  return (
    <div className="relative flex h-[768px] w-[1366px] flex-col overflow-hidden font-['Open_Sans',sans-serif]">
      <BackgroundWindow />
      <Taskbar />
      <div className="absolute left-[7px] top-0 flex h-[721px] w-[1352px] flex-col border border-[#606060] bg-[#f7f7f7] shadow-[0_1px_8px_rgba(0,0,0,0.4)] [clip-path:inset(0_-7px_-7px_-7px)]">
        <TabStrip />
        <Toolbar />
        <div className="flex min-h-0 flex-1">
          <div className="flex w-[1295px] shrink-0 flex-col border-t border-[#b5b5b5]">
            <PageHeader />
            <div className="flex min-h-0 flex-1">
              <QuestionNav />
              <Question />
              <Track><div className="mt-[5px] h-[92px] w-[9px] rounded-full bg-[#8b8b8b]" /></Track>
            </div>
          </div>
          <EdgeSidebar />
        </div>
      </div>
    </div>
  );
}
